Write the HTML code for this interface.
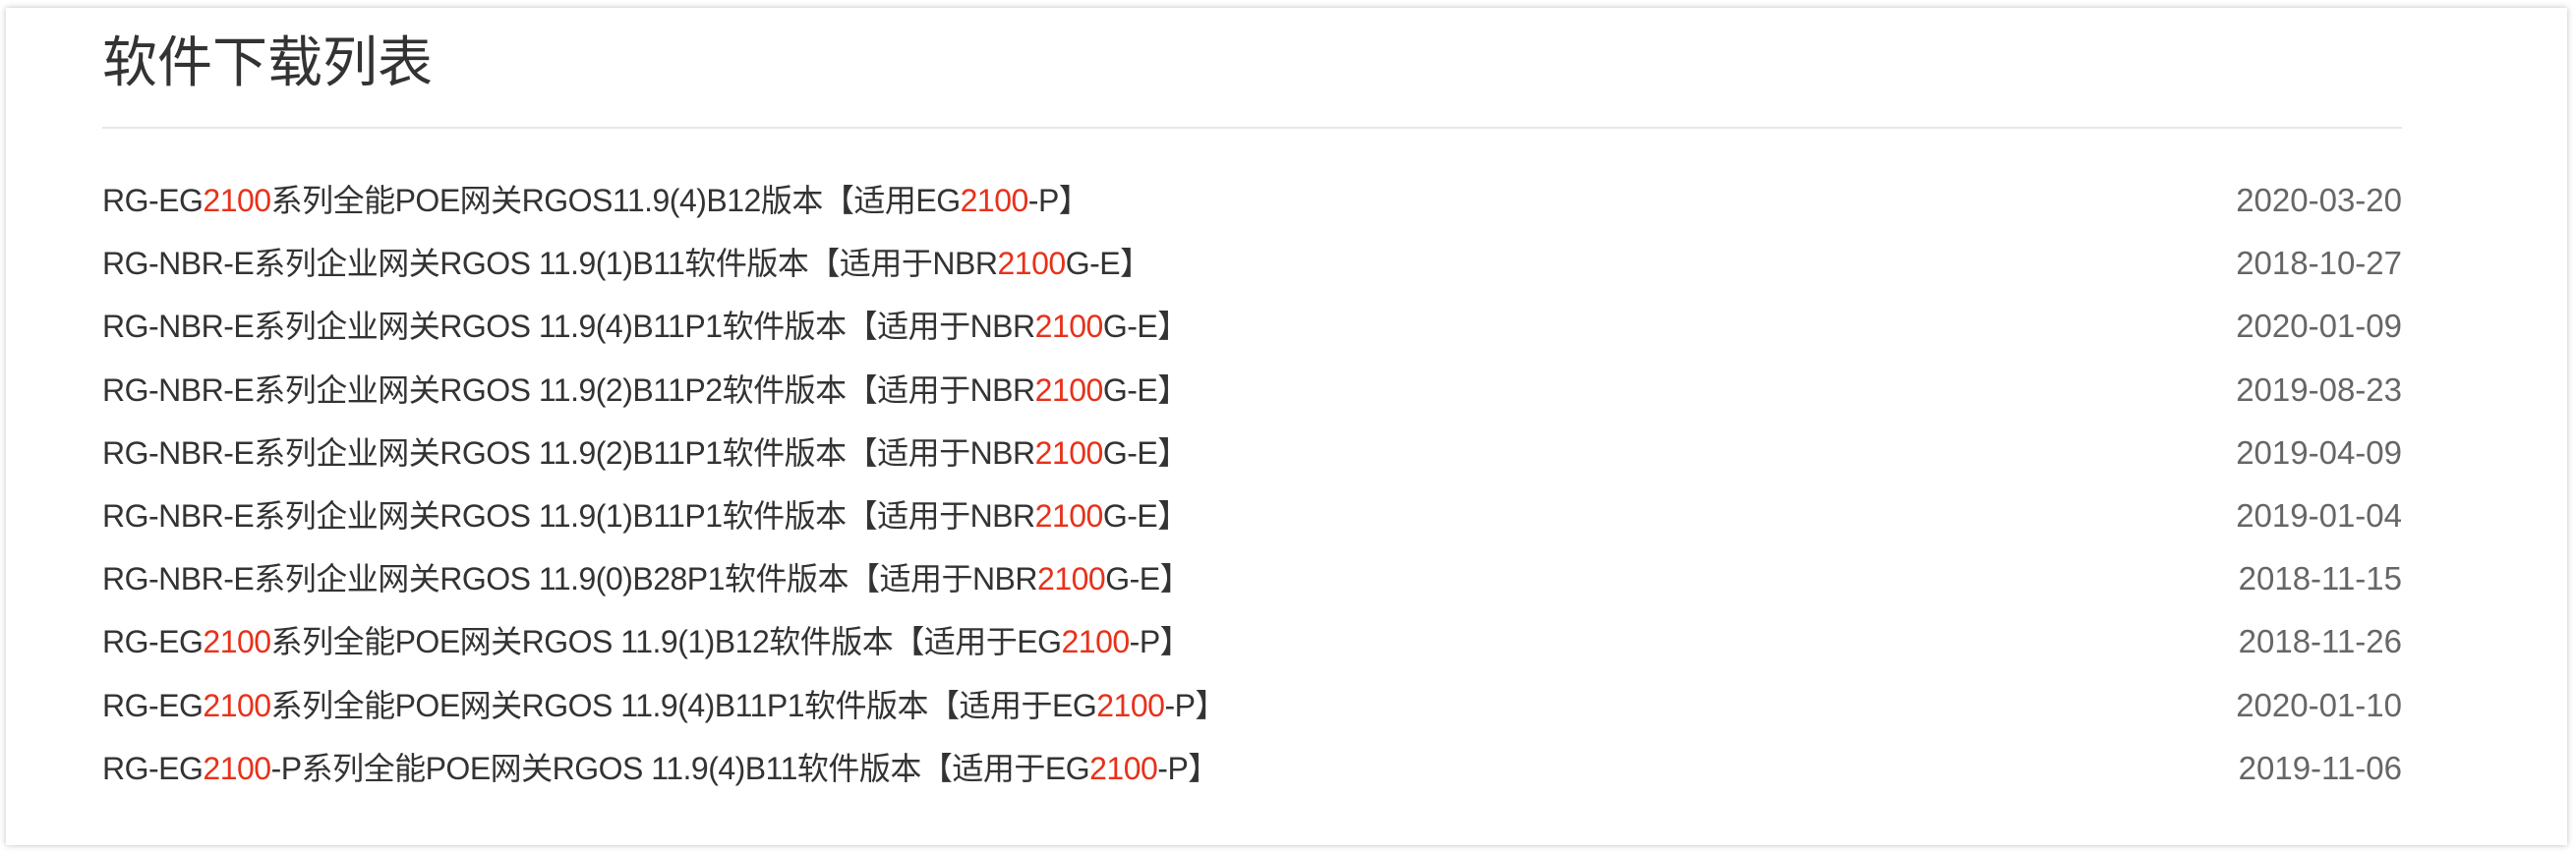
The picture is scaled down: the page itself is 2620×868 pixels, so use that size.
<!DOCTYPE html>
<html><head><meta charset="utf-8"><style>
html,body{margin:0;padding:0;background:#fff;width:2620px;height:868px;overflow:hidden;}
.card{position:absolute;left:6px;top:8px;width:2605px;height:852px;background:#fff;box-shadow:0 0 6px rgba(0,0,0,.25);}
h1{position:absolute;left:98px;top:16px;margin:0;font:56px/80px "Liberation Sans","Noto Sans CJK SC",sans-serif;color:#333;font-weight:normal;}
.line{position:absolute;left:98px;top:121px;width:2339px;height:2px;background:#e6e6e6;}
.row{position:absolute;left:98px;width:2339px;height:40px;font:32px/40px "Liberation Sans","Noto Sans CJK SC",sans-serif;color:#333;letter-spacing:-0.5px;}
.row .d{position:absolute;right:0;top:0;color:#666;font-size:33px;letter-spacing:0}
.r{color:#e8311a}
</style></head><body><div class="card">
<h1>软件下载列表</h1>
<div class="line"></div>
<div class="row" style="top:176px">RG-EG<span class="r">2100</span>系列全能POE网关RGOS11.9(4)B12版本【适用EG<span class="r">2100</span>-P】<span class="d">2020-03-20</span></div>
<div class="row" style="top:240px">RG-NBR-E系列企业网关RGOS 11.9(1)B11软件版本【适用于NBR<span class="r">2100</span>G-E】<span class="d">2018-10-27</span></div>
<div class="row" style="top:304px">RG-NBR-E系列企业网关RGOS 11.9(4)B11P1软件版本【适用于NBR<span class="r">2100</span>G-E】<span class="d">2020-01-09</span></div>
<div class="row" style="top:369px">RG-NBR-E系列企业网关RGOS 11.9(2)B11P2软件版本【适用于NBR<span class="r">2100</span>G-E】<span class="d">2019-08-23</span></div>
<div class="row" style="top:433px">RG-NBR-E系列企业网关RGOS 11.9(2)B11P1软件版本【适用于NBR<span class="r">2100</span>G-E】<span class="d">2019-04-09</span></div>
<div class="row" style="top:497px">RG-NBR-E系列企业网关RGOS 11.9(1)B11P1软件版本【适用于NBR<span class="r">2100</span>G-E】<span class="d">2019-01-04</span></div>
<div class="row" style="top:561px">RG-NBR-E系列企业网关RGOS 11.9(0)B28P1软件版本【适用于NBR<span class="r">2100</span>G-E】<span class="d">2018-11-15</span></div>
<div class="row" style="top:625px">RG-EG<span class="r">2100</span>系列全能POE网关RGOS 11.9(1)B12软件版本【适用于EG<span class="r">2100</span>-P】<span class="d">2018-11-26</span></div>
<div class="row" style="top:690px">RG-EG<span class="r">2100</span>系列全能POE网关RGOS 11.9(4)B11P1软件版本【适用于EG<span class="r">2100</span>-P】<span class="d">2020-01-10</span></div>
<div class="row" style="top:754px">RG-EG<span class="r">2100</span>-P系列全能POE网关RGOS 11.9(4)B11软件版本【适用于EG<span class="r">2100</span>-P】<span class="d">2019-11-06</span></div>
</div></body></html>
